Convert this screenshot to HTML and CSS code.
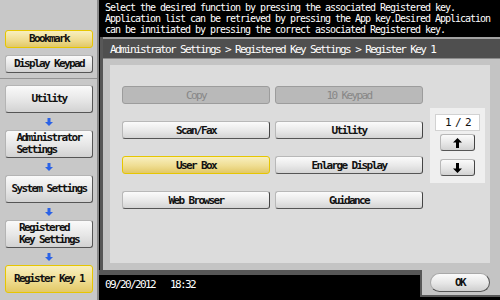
FILE: index.html
```html
<!DOCTYPE html>
<html>
<head>
<meta charset="utf-8">
<link rel="stylesheet" href="styles.css">
</head>
<body>
<div class="screen">
  <aside class="side">
    <div class="side-top">
      <div class="sbtn sbtn-sm sel">Bookmark</div>
      <div class="sbtn sbtn-sm">Display Keypad</div>
    </div>
    <div class="side-flow">
      <div class="sbtn">Utility</div>
      <div class="flow-arrow"><svg width="8" height="8" viewBox="0 0 8 8"><path d="M2.5 0h3v4H8L4 8 0 4h2.5z" fill="#2b62e6"/></svg></div>
      <div class="sbtn"><span class="ml">Administrator<br>Settings</span></div>
      <div class="flow-arrow"><svg width="8" height="8" viewBox="0 0 8 8"><path d="M2.5 0h3v4H8L4 8 0 4h2.5z" fill="#2b62e6"/></svg></div>
      <div class="sbtn">System Settings</div>
      <div class="flow-arrow"><svg width="8" height="8" viewBox="0 0 8 8"><path d="M2.5 0h3v4H8L4 8 0 4h2.5z" fill="#2b62e6"/></svg></div>
      <div class="sbtn"><span class="ml">Registered<br>Key Settings</span></div>
      <div class="flow-arrow"><svg width="8" height="8" viewBox="0 0 8 8"><path d="M2.5 0h3v4H8L4 8 0 4h2.5z" fill="#2b62e6"/></svg></div>
      <div class="sbtn sel">Register Key 1</div>
    </div>
  </aside>
  <main class="main">
    <div class="msg">Select the desired function by pressing the associated Registered key.<br>Application list can be retrieved by pressing the App key.Desired Application<br>can be innitiated by pressing the correct associated Registered key.</div>
    <section class="panel">
      <div class="crumb">Administrator Settings &gt; Registered Key Settings &gt; Register Key 1</div>
      <div class="frame">
        <div class="inner">
          <div class="grid">
            <div class="btn dis">Copy</div>
            <div class="btn dis">10 Keypad</div>
            <div class="btn">Scan/Fax</div>
            <div class="btn">Utility</div>
            <div class="btn sel">User Box</div>
            <div class="btn">Enlarge Display</div>
            <div class="btn">Web Browser</div>
            <div class="btn">Guidance</div>
          </div>
          <div class="pager">
            <div class="count">1 / 2</div>
            <div class="pbtn"><svg width="9" height="10" viewBox="0 0 9 10"><path d="M3 10V4.5H0L4.5 0 9 4.5H6V10z" fill="#000"/></svg></div>
            <div class="pbtn pbtn-down"><svg width="9" height="10" viewBox="0 0 9 10"><path d="M3 0v5.5H0L4.5 10 9 5.5H6V0z" fill="#000"/></svg></div>
          </div>
        </div>
      </div>
    </section>
    <div class="foot">
      <div class="date">09/20/2012   18:32</div>
      <div class="oktab"><div class="ok">OK</div></div>
    </div>
  </main>
</div>
</body>
</html>
```
FILE: styles.css
```css
* { box-sizing: border-box; }
html, body { margin: 0; padding: 0; background: #000; }
body {
  font-family: "DejaVu Sans Mono", "Liberation Mono", monospace;
  font-size: 11px;
  letter-spacing: -1.62px;
}
.screen { display: flex; width: 500px; height: 300px; overflow: hidden; }

/* sidebar */
.side {
  width: 99px;
  background: #c8c8c8;
  border-right: 2px solid #8a8a8a;
  display: flex;
  flex-direction: column;
}
.side-top {
  height: 79px;
  padding: 30px 0 0 5px;
  border-bottom: 1px solid #939393;
  display: flex;
  flex-direction: column;
  gap: 7px;
}
.side-flow {
  padding: 6px 0 0 5px;
  display: flex;
  flex-direction: column;
}
.sbtn {
  width: 88px;
  height: 28px;
  display: flex;
  align-items: center;
  justify-content: center;
  font-weight: bold;
  color: #111;
  line-height: 12px;
  background: linear-gradient(#fafafa, #e6e6e6 55%, #d2d2d2);
  border: 1px solid #b4b4b4;
  border-right-color: #555;
  border-bottom-color: #555;
  border-radius: 3px;
}
.sbtn-sm { height: 18px; }
.sbtn.sel {
  background: linear-gradient(#f8efbf, #efdd92 55%, #e2c866);
  border: 1px solid #e6c600;
}
.ml { display: inline-block; text-align: left; line-height: 12px; }
.flow-arrow {
  width: 88px;
  height: 17px;
  display: flex;
  align-items: center;
  justify-content: center;
}
.flow-arrow svg { display: block; }

/* main */
.main {
  flex: 1;
  background: #000;
  display: flex;
  flex-direction: column;
}
.msg {
  height: 37px;
  padding: 2px 0 0 6px;
  color: #fff;
  font-size: 10px;
  letter-spacing: -1.02px;
  line-height: 11px;
  white-space: nowrap;
}
.panel {
  margin-left: 1px;
  border-left: 3px solid #585858;
}
.crumb {
  height: 21px;
  background: #4f4f4f;
  border-top: 2px solid #a2a2a2;
  color: #fff;
  padding: 5px 0 0 7px;
  line-height: 12px;
  white-space: nowrap;
}
.frame {
  background: #c4c4c4;
  padding: 6px 10px 7px 7px;
  border-top: 1px solid #8c8c8c;
}
.inner {
  height: 198px;
  background: #dcdcdc;
  display: flex;
  padding: 21px 0 0 12px;
}
.grid {
  display: grid;
  grid-template-columns: 148px 148px;
  grid-auto-rows: 18px;
  gap: 17px 5px;
  align-content: start;
}
.btn {
  display: flex;
  align-items: center;
  justify-content: center;
  font-weight: bold;
  color: #111;
  background: linear-gradient(#fbfbfb, #e8e8e8 55%, #d4d4d4);
  border: 1px solid #b8b8b8;
  border-right-color: #444;
  border-bottom-color: #555;
  border-radius: 3px;
}
.btn.dis {
  background: #b9b9b9;
  border: 1px solid #9c9c9c;
  color: #878787;
  font-weight: normal;
}
.btn.sel {
  background: linear-gradient(#f8efbf, #efdd92 55%, #e2c866);
  border: 1px solid #e6c600;
}
.pager {
  margin: 22px 0 0 7px;
  width: 55px;
  height: 75px;
  background: #efefef;
  display: flex;
  flex-direction: column;
  align-items: center;
}
.count {
  margin-top: 6px;
  width: 45px;
  height: 17px;
  background: #fff;
  border: 1px solid #d2d2d2;
  display: flex;
  align-items: center;
  justify-content: center;
  color: #111;
}
.pbtn {
  margin-top: 3px;
  width: 35px;
  height: 17px;
  display: flex;
  align-items: center;
  justify-content: center;
  background: linear-gradient(#fbfbfb, #e6e6e6 55%, #d2d2d2);
  border: 1px solid #b8b8b8;
  border-right-color: #444;
  border-bottom-color: #555;
  border-radius: 3px;
}
.pbtn-down { margin-top: 8px; }
.pbtn svg { display: block; }

/* footer */
.foot { flex: 1; display: flex; }
.date {
  flex: 1;
  border-top: 5px solid #575757;
  color: #fff;
  padding: 4px 0 0 6px;
  white-space: pre;
  line-height: 11px;
}
.oktab {
  width: 80px;
  margin-bottom: 3px;
  background: #c4c4c4;
  border-left: 2px solid #575757;
  border-bottom: 2px solid #575757;
  padding: 3px 0 0 8px;
}
.ok {
  width: 60px;
  height: 19px;
  border-radius: 10px;
  display: flex;
  align-items: center;
  justify-content: center;
  font-weight: bold;
  color: #111;
  background: linear-gradient(#fbfbfb, #e6e6e6 55%, #cecece);
  border: 1px solid #a8a8a8;
  border-right-color: #555;
  border-bottom-color: #555;
}
```
